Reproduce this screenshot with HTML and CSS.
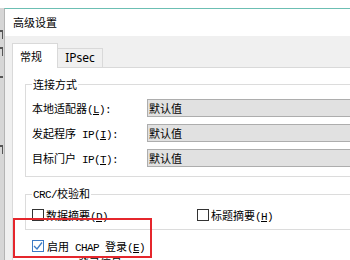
FILE: index.html
```html
<!DOCTYPE html>
<html lang="zh-CN">
<head>
    <meta charset="UTF-8">
    <title>高级设置</title>
    <link rel="stylesheet" href="styles.css">
</head>
<body>
<div class="screen">
    <div class="behind">
        <div class="frag f1"></div>
        <div class="frag f2"></div>
        <div class="frag f3"></div>
        <div class="frag f4"></div>
    </div>
    <div class="dialog">
        <div class="titlebar">高级设置</div>
        <div class="client">
            <div class="tabs">
                <div class="tab active">常规</div>
                <div class="tab">IPsec</div>
                <div class="tab-fill"></div>
            </div>
            <div class="panel">
                <fieldset class="group conn">
                    <legend>连接方式</legend>
                    <div class="row">
                        <div class="label">本地适配器<span class="lat">(<u>L</u>):</span></div>
                        <div class="combo">默认值</div>
                    </div>
                    <div class="row">
                        <div class="label">发起程序<span class="lat"> IP(<u>I</u>):</span></div>
                        <div class="combo">默认值</div>
                    </div>
                    <div class="row">
                        <div class="label">目标门户<span class="lat"> IP(<u>T</u>):</span></div>
                        <div class="combo">默认值</div>
                    </div>
                </fieldset>
                <fieldset class="group crc">
                    <legend><span class="lat">CRC/</span>校验和</legend>
                    <div class="checks">
                        <div class="check"><span class="box"></span><span>数据摘要<span class="lat">(<u>D</u>)</span></span></div>
                        <div class="check"><span class="box"></span><span>标题摘要<span class="lat">(<u>H</u>)</span></span></div>
                    </div>
                </fieldset>
                <div class="check chap">
                    <span class="box checked">
                        <svg width="10" height="10" viewBox="0 0 10 10"><path d="M1 5 L4 8 L9 1.5" fill="none" stroke="#3d7bc4" stroke-width="1.3"/></svg>
                    </span>
                    <span>启用<span class="lat"> CHAP </span>登录<span class="lat">(<u>E</u>)</span></span>
                </div>
                <div class="sub"><span class="lat">CHAP </span>登录信息</div>
            </div>
        </div>
    </div>
</div>
<div class="highlight"></div>
</body>
</html>
```

FILE: styles.css
```css
html, body {
    margin: 0;
    width: 350px;
    height: 260px;
    overflow: hidden;
    background: #fff;
}
body {
    position: relative;
    font: 11px "Noto Sans CJK SC", sans-serif;
    color: #000;
}

.screen {
    display: flex;
    padding-top: 8px;
    height: 252px;
}

/* window behind the dialog, only a sliver shows */
.behind {
    width: 4px;
    flex: none;
    background: #d6d6d6;
    padding-top: 22px;
}
.frag {
    height: 9px;
    width: 3px;
    border-top: 2px solid #555;
    border-right: 1px solid #555;
    box-sizing: border-box;
}
.f2 { margin-top: 8px; }
.f3 { margin-top: 20px; border-right: none; }
.f4 { margin-top: 60px; }

.dialog {
    flex: 1;
    border-top: 1px solid #6cbfb3;
    border-left: 1px solid #b4b4b4;
    background: #f0f0f0;
}
.titlebar {
    height: 27px;
    line-height: 27px;
    padding-left: 8px;
    background: #fff;
}
.client {
    padding: 7px 0 0 7px;
}

.tabs {
    display: flex;
    align-items: flex-end;
    height: 25px;
}
.tab {
    box-sizing: border-box;
    height: 20px;
    width: 45px;
    border: 1px solid #d9d9d9;
    border-left: none;
    background: #f0f0f0;
    font-family: "Noto Sans", sans-serif;
    font-size: 12px;
    line-height: 18px;
    text-align: center;
}
.tab.active {
    height: 25px;
    width: 46px;
    border-left: 1px solid #d9d9d9;
    border-bottom: none;
    background: #fff;
    text-align: left;
    padding: 4px 0 0 7px;
    line-height: 16px;
    font-family: "Noto Sans CJK SC", sans-serif;
    font-size: 11px;
}
.tab-fill {
    flex: 1;
    border-bottom: 1px solid #d9d9d9;
}

.panel {
    background: #fff;
    border-left: 1px solid #d9d9d9;
    padding-top: 9px;
    height: 200px;
}

.group {
    margin: 0 -40px 0 12px;
    border: 1px solid #dcdcdc;
    padding: 8px 0 9px 6px;
    min-width: 0;
}
.group legend {
    padding: 0 1px;
    line-height: 14px;
}
.group.crc {
    margin-top: 9px;
    padding: 5px 0 6px 6px;
}

.lat {
    font-family: "Liberation Mono", monospace;
    font-size: 11px;
    letter-spacing: -0.6px;
}

.row {
    display: flex;
    align-items: center;
    height: 18px;
}
.row + .row {
    margin-top: 7px;
}
.label {
    width: 115px;
    flex: none;
}
.combo {
    flex: 1;
    box-sizing: border-box;
    height: 18px;
    line-height: 16px;
    padding-left: 1px;
    border: 1px solid #adadad;
    background: #e1e1e1;
}

.checks {
    display: grid;
    grid-template-columns: 165px auto;
}
.check {
    display: flex;
    align-items: center;
    height: 16px;
}
.box {
    box-sizing: border-box;
    width: 12px;
    height: 12px;
    border: 1px solid #333;
    background: #fff;
    margin-right: 2px;
    display: flex;
    align-items: center;
    justify-content: center;
}
.box.checked {
    border-color: #3d7bc4;
    margin-right: 3px;
}
.chap {
    margin-top: 8px;
    padding-left: 19px;
}
.sub {
    margin-top: 0;
    padding-left: 35px;
    line-height: 16px;
}

/* annotation drawn over the screenshot */
.highlight {
    position: absolute;
    left: 13px;
    top: 218px;
    width: 139px;
    height: 40px;
    box-sizing: border-box;
    border: 2px solid #e5262c;
}
```
